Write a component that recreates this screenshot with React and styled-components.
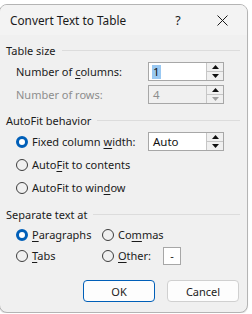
import styled, { createGlobalStyle } from 'styled-components';

const Global = createGlobalStyle`
    html, body {
        margin: 0;
        padding: 0;
        background: #ffffff;
    }
    body {
        font-family: "Noto Sans", "Open Sans", sans-serif;
        font-size: 11px;
        color: #1b1b1b;
    }
`;

const Dialog = styled.div`
    box-sizing: border-box;
    width: 249px;
    height: 309px;
    margin-top: 4px;
    margin-left: -1px;
    background: #f0f0f0;
    border: 1px solid #b4b4b4;
    border-radius: 8px;
    box-shadow: 0 1px 1px rgba(0, 0, 0, 0.12);
    display: flex;
    flex-direction: column;
    overflow: hidden;
`;

const TitleBar = styled.div`
    height: 30px;
    flex: none;
    display: flex;
    align-items: center;
    background: #f3f3f3;
    padding-left: 10px;
`;

const Title = styled.div`
    flex: 1;
    font-size: 11.8px;
    color: #1a1a1a;
`;

const TitleButton = styled.div`
    width: ${({ $w }) => $w}px;
    margin-right: ${({ $gap }) => $gap || 0}px;
    display: flex;
    justify-content: center;
    align-items: center;
    font-size: 12.5px;
    color: #1a1a1a;
`;

const Body = styled.div`
    display: flex;
    flex-direction: column;
    padding: 0 7px 0 6px;
`;

const SectionHeader = styled.div`
    display: flex;
    align-items: center;
    gap: 6px;
    height: 20px;
    margin-top: ${({ $top }) => $top || 0}px;

    &::after {
        content: '';
        flex: 1;
        height: 1px;
        background: #dcdcdc;
    }
`;

const Row = styled.div`
    display: flex;
    align-items: center;
    height: ${({ $h }) => $h || 23}px;
    padding-left: ${({ $indent }) => $indent || 10}px;
    color: ${({ $disabled }) => ($disabled ? '#8d8d8d' : '#1b1b1b')};
`;

const Label = styled.div`
    width: ${({ $w }) => ($w ? `${$w}px` : 'auto')};
    flex: none;
    white-space: nowrap;
`;

const U = styled.span`
    text-decoration: underline;
    text-underline-offset: 2px;
`;

const Spin = styled.div`
    box-sizing: border-box;
    width: 76px;
    height: 19px;
    display: flex;
    border: 1px solid #a7a7a7;
    background: ${({ $disabled }) => ($disabled ? '#f0f0f0' : '#ffffff')};
`;

const SpinValue = styled.div`
    flex: 1;
    display: flex;
    align-items: center;
    padding-left: 3px;
    font-size: 11.5px;
    color: ${({ $disabled }) => ($disabled ? '#8d8d8d' : '#111111')};

    & > span {
        background: ${({ $selected }) => ($selected ? '#99c8f2' : 'transparent')};
        line-height: 14px;
        padding: 0 1px;
    }
`;

const SpinButtons = styled.div`
    width: 16px;
    display: flex;
    flex-direction: column;
    border-left: 1px solid #c6c6c6;
    background: #f0f0f0;
`;

const SpinHalf = styled.div`
    flex: 1;
    display: flex;
    align-items: center;
    justify-content: center;
    & + & {
        border-top: 1px solid #c6c6c6;
    }
`;

const Arrow = ({ up, color = '#111' }) => (
    <svg width="7" height="4" viewBox="0 0 7 4">
        {up ? <polygon points="0,4 7,4 3.5,0" fill={color} /> : <polygon points="0,0 7,0 3.5,4" fill={color} />}
    </svg>
);

const Spinner = ({ value, disabled, selected, downGray }) => (
    <Spin $disabled={disabled}>
        <SpinValue $disabled={disabled} $selected={selected}><span>{value}</span></SpinValue>
        <SpinButtons>
            <SpinHalf><Arrow up /></SpinHalf>
            <SpinHalf><Arrow color={downGray ? '#a0a0a0' : '#111'} /></SpinHalf>
        </SpinButtons>
    </Spin>
);

const RadioLabel = styled(Label)`
    display: flex;
    align-items: center;
`;

const RadioCircle = styled.span`
    box-sizing: border-box;
    width: 12px;
    height: 12px;
    border-radius: 50%;
    flex: none;
    margin-right: 4px;
    border: ${({ $on }) => ($on ? '3.5px solid #005fb8' : '1px solid #3d3d3d')};
    background: ${({ $on }) => ($on ? '#ffffff' : 'transparent')};
`;

const Radio = ({ on, children, w }) => (
    <RadioLabel $w={w}>
        <RadioCircle $on={on} />
        <span>{children}</span>
    </RadioLabel>
);

const SmallBox = styled.div`
    box-sizing: border-box;
    width: 18px;
    height: 18px;
    margin-left: 12px;
    border: 1px solid #a7a7a7;
    background: #fff;
    display: flex;
    align-items: center;
    justify-content: center;
    font-size: 11px;
`;

const Footer = styled.div`
    display: flex;
    justify-content: flex-end;
    gap: 12px;
    margin-top: 14px;
    padding-right: 1px;
`;

const Button = styled.button`
    box-sizing: border-box;
    width: 72px;
    height: 22px;
    border-radius: 4px;
    background: #fdfdfd;
    border: 1px solid ${({ $primary }) => ($primary ? '#005fb8' : '#d0d0d0')};
    font-family: inherit;
    font-size: 11px;
    color: #1b1b1b;
    padding: 0;
`;

const CloseIcon = () => (
    <svg width="11" height="11" viewBox="0 0 11 11">
        <path d="M0.5 0.5 L10.5 10.5 M10.5 0.5 L0.5 10.5" stroke="#1a1a1a" strokeWidth="1" />
    </svg>
);

export default function App() {
    return (
        <>
            <Global />
            <Dialog>
                <TitleBar>
                    <Title>Convert Text to Table</Title>
                    <TitleButton $w={20} $gap={9}>?</TitleButton>
                    <TitleButton $w={50}><CloseIcon /></TitleButton>
                </TitleBar>
                <Body>
                    <SectionHeader $top={5}>Table size</SectionHeader>
                    <Row>
                        <Label $w={132}>Number of <U>c</U>olumns:</Label>
                        <Spinner value="1" selected />
                    </Row>
                    <Row $disabled>
                        <Label $w={132}>Number of rows:</Label>
                        <Spinner value="4" disabled downGray />
                    </Row>
                    <SectionHeader $top={4}>AutoFit behavior</SectionHeader>
                    <Row>
                        <Radio on w={132}>Fixed column <U>w</U>idth:</Radio>
                        <Spinner value="Auto" />
                    </Row>
                    <Row>
                        <Radio>Auto<U>F</U>it to contents</Radio>
                    </Row>
                    <Row>
                        <Radio>AutoFit to win<U>d</U>ow</Radio>
                    </Row>
                    <SectionHeader $top={5}>Separate text at</SectionHeader>
                    <Row $h={21}>
                        <Radio on w={86}><U>P</U>aragraphs</Radio>
                        <Radio>Co<U>m</U>mas</Radio>
                    </Row>
                    <Row $h={21}>
                        <Radio w={86}><U>T</U>abs</Radio>
                        <Radio><U>O</U>ther:</Radio>
                        <SmallBox>-</SmallBox>
                    </Row>
                    <Footer>
                        <Button $primary>OK</Button>
                        <Button>Cancel</Button>
                    </Footer>
                </Body>
            </Dialog>
        </>
    );
}
